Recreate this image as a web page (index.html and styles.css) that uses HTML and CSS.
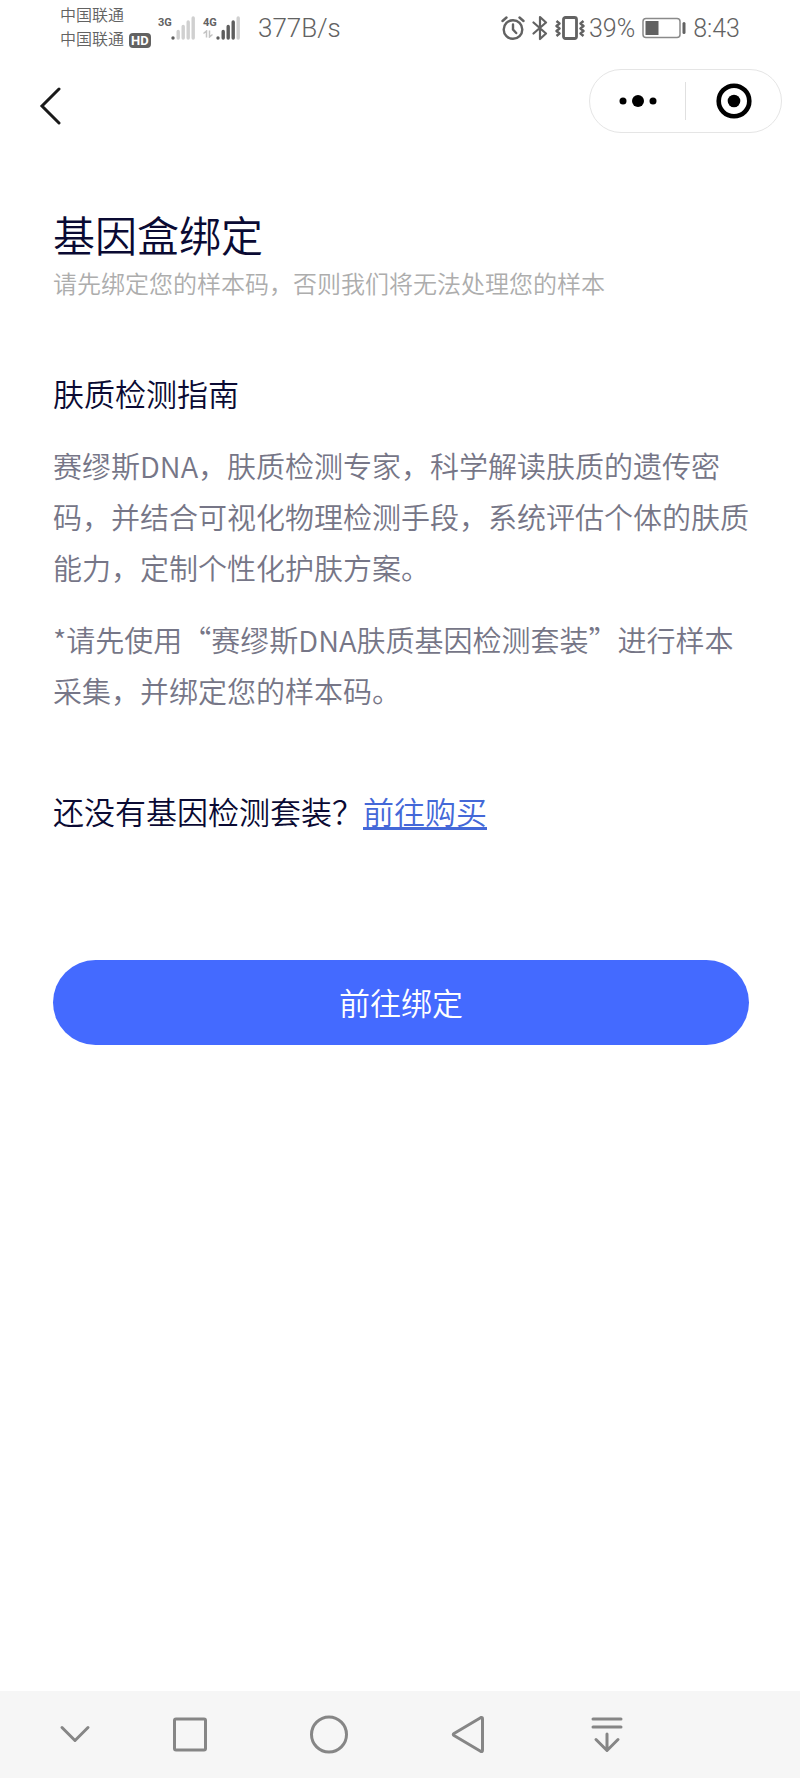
FILE: index.html
```html
<!DOCTYPE html>
<html lang="zh-CN">
<head>
  <meta charset="UTF-8">
  <meta name="viewport" content="width=device-width, initial-scale=1.0">
  <title>基因盒绑定</title>
  <link rel="stylesheet" href="styles.css">
</head>
<body>
  <!-- 状态栏 -->
  <div class="status">
    <div class="carriers">
      <div>中国联通</div>
      <div>中国联通<span class="hd">HD</span></div>
    </div>
    <div class="signal">
      <span class="net">3G</span>
      <svg width="24" height="24" viewBox="0 0 24 24" stroke="#d0d0d0" stroke-width="3.4" stroke-linecap="round">
        <path d="M7.2 15.5V22M12.2 10.5V22M17.2 6V22M22.2 2V22"/>
        <path stroke="#5e5e5e" d="M2 22V22"/>
      </svg>
    </div>
    <div class="signal">
      <span class="net">4G
        <svg width="10" height="8" viewBox="0 0 10 8" fill="none" stroke="#c4c4c4" stroke-width="1.5">
          <path d="M0.5 3.5L3.5 1V7.5M6.5 0.5V7L9.5 4.5"/>
        </svg>
      </span>
      <svg width="24" height="24" viewBox="0 0 24 24" stroke="#5e5e5e" stroke-width="3.4" stroke-linecap="round">
        <path d="M2 22V22M7.2 15.5V22M12.2 10.5V22M17.2 6V22"/>
        <path stroke="#d0d0d0" d="M22.2 2V22"/>
      </svg>
    </div>
    <span class="speed">377B/s</span>
    <div class="status-right">
      <svg width="24" height="26" viewBox="0 0 24 26" fill="none" stroke="#626262" stroke-width="2.4" stroke-linecap="round">
        <circle cx="12" cy="14.5" r="9.3"/>
        <path d="M12 9.5V14.5L15.2 18M1.5 6L5.5 2.5M22.5 6L18.5 2.5"/>
      </svg>
      <svg width="16" height="26" viewBox="0 0 16 26" fill="none" stroke="#626262" stroke-width="2.2" stroke-linejoin="round" stroke-linecap="round">
        <path d="M1.5 7.5L14 18.5L8 24V2L14 7.5L1.5 18.5"/>
      </svg>
      <svg class="vibrate" width="30" height="26" viewBox="0 0 30 26" fill="none" stroke="#626262" stroke-width="2.8" stroke-linejoin="round">
        <rect x="8.5" y="2.5" width="13" height="21" rx="2"/>
        <path stroke-width="2.4" d="M1.5 6L4.5 8.5L1.5 11L4.5 13.5L1.5 16L4.5 18.5L1.5 21M28.5 6L25.5 8.5L28.5 11L25.5 13.5L28.5 16L25.5 18.5L28.5 21"/>
      </svg>
      <span>39%</span>
      <svg class="battery" width="44" height="22" viewBox="0 0 44 22">
        <rect x="1" y="1.5" width="37" height="19" rx="3" fill="none" stroke="#8a8a8a" stroke-width="1.5"/>
        <rect x="3.5" y="4" width="13" height="14" fill="#626262"/>
        <rect x="40.5" y="5" width="3" height="12" rx="1.5" fill="#626262"/>
      </svg>
      <span>8:43</span>
    </div>
  </div>

  <!-- 导航栏 -->
  <header class="header">
    <button class="back" type="button" aria-label="返回">
      <svg width="22" height="40" viewBox="0 0 22 40" fill="none" stroke="#1a1a1a" stroke-width="3" stroke-linecap="round">
        <path d="M20 3L3 20L20 37"/>
      </svg>
    </button>
    <div class="capsule">
      <button type="button" aria-label="更多">
        <svg width="38" height="36" viewBox="0 0 38 36">
          <circle cx="4" cy="18" r="3.5"/>
          <circle cx="19" cy="18" r="6"/>
          <circle cx="34" cy="18" r="3.5"/>
        </svg>
      </button>
      <button type="button" aria-label="关闭">
        <svg width="36" height="36" viewBox="0 0 36 36">
          <circle cx="18" cy="18" r="15.3" fill="none" stroke="#000" stroke-width="4.6"/>
          <circle cx="18" cy="18" r="6.3"/>
        </svg>
      </button>
    </div>
  </header>

  <main class="main">
    <h1 class="title">基因盒绑定</h1>
    <p class="subtitle">请先绑定您的样本码，否则我们将无法处理您的样本</p>

    <h2 class="guide-title">肤质检测指南</h2>
    <div class="guide">
      <p>赛缪斯DNA，肤质检测专家，科学解读肤质的遗传密码，并结合可视化物理检测手段，系统评估个体的肤质能力，定制个性化护肤方案。</p>
      <p>*请先使用“赛缪斯DNA肤质基因检测套装”进行样本采集，并绑定您的样本码。</p>
    </div>

    <p class="buy">还没有基因检测套装？<a href="#">前往购买</a></p>

    <button class="bind" type="button">前往绑定</button>
  </main>

  <!-- 系统按键 -->
  <nav class="keys">
    <button type="button" aria-label="收起">
      <svg viewBox="0 0 40 41"><path d="M7 13.5L20 26.5L33 13.5"/></svg>
    </button>
    <button type="button" aria-label="最近任务">
      <svg viewBox="0 0 40 41"><rect x="4.5" y="5" width="31" height="31" rx="1.5"/></svg>
    </button>
    <button type="button" aria-label="主页">
      <svg viewBox="0 0 40 41"><circle cx="20" cy="20.5" r="17.5"/></svg>
    </button>
    <button type="button" aria-label="返回上一级">
      <svg viewBox="0 0 40 41"><path d="M33 3.5Q34.5 3 34.5 5V36Q34.5 38 33 37.5L6 21.5Q4.5 20.5 6 19.5Z"/></svg>
    </button>
    <button type="button" aria-label="通知栏">
      <svg viewBox="0 0 40 41"><path d="M6 5H34M6 13H34M20 20V36M9 25.5L20 36.5L31 25.5"/></svg>
    </button>
  </nav>
</body>
</html>
```
FILE: styles.css
```css
* {
  box-sizing: border-box;
  margin: 0;
  padding: 0;
}
body {
  display: flex;
  flex-direction: column;
  min-height: 100vh;
  background-color: #fff;
  color: #0a0a33;
  font-family: "Noto Sans CJK SC", sans-serif;
  font-weight: 350;
}
button {
  border: none;
  background: none;
  font: inherit;
  cursor: pointer;
}
svg {
  display: block;
}

/* 状态栏 */
.status {
  display: flex;
  align-items: center;
  height: 56px;
  padding: 0 60px;
  color: #626262;
  font-family: Roboto, "Noto Sans CJK SC", sans-serif;
}
.carriers {
  width: 98px;
  font-size: 16px;
  line-height: 24px;
}
.carriers div {
  display: flex;
  align-items: center;
}
.hd {
  margin-left: 5px;
  padding: 0 2px;
  border-radius: 4px;
  background-color: #626262;
  color: #fff;
  font-size: 13px;
  font-weight: 700;
  line-height: 15px;
}
.signal {
  display: flex;
  width: 45px;
}
.net {
  width: 13px;
  font-size: 11px;
  font-weight: 700;
  line-height: 14px;
}
.speed {
  margin-left: 10px;
  font-size: 26px;
  font-weight: 300;
}
.status-right {
  display: flex;
  align-items: center;
  margin-left: auto;
  font-size: 25px;
  font-weight: 300;
}
.status-right svg {
  margin-right: 7px;
}
.status-right .vibrate {
  margin-right: 4px;
}
.status-right .battery {
  margin-left: 7px;
}

/* 导航栏 */
.header {
  display: flex;
  align-items: center;
  justify-content: space-between;
  height: 90px;
  padding: 0 18px 0 39px;
}
.back {
  padding-top: 10px;
}
.capsule {
  display: flex;
  align-items: center;
  width: 193px;
  height: 64px;
  border: 1px solid #e5e5e5;
  border-radius: 32px;
}
.capsule button {
  display: flex;
  flex: 1;
  align-items: center;
  justify-content: center;
  height: 38px;
}
.capsule button + button {
  border-left: 1px solid #e0e0e0;
}

/* 内容 */
.main {
  flex: 1;
  padding: 63px 51px 63px 53px;
}
.title {
  font-size: 42px;
  font-weight: 350;
  line-height: 50px;
}
.subtitle {
  margin-top: 7px;
  color: #adadad;
  font-size: 24px;
  line-height: 34px;
}
.guide-title {
  margin-top: 71px;
  font-size: 31px;
  font-weight: 350;
  line-height: 44px;
}
.guide {
  margin-top: 25px;
  color: #767687;
  font-size: 29px;
  line-height: 51px;
}
.guide p + p {
  margin-top: 21px;
}
.buy {
  margin-top: 73px;
  font-size: 31px;
  line-height: 44px;
}
.buy a {
  color: #4468d8;
  text-decoration-thickness: 3px;
  text-underline-offset: 3px;
  text-decoration-skip-ink: none;
}
.bind {
  display: block;
  width: 100%;
  height: 85px;
  margin-top: 127px;
  padding-bottom: 2px;
  border-radius: 43px;
  background-color: #446aff;
  color: #fff;
  font-size: 31px;
}

/* 系统按键 */
.keys {
  display: grid;
  grid-template-columns: 92fr repeat(4, 139fr);
  height: 87px;
  padding: 0 124px 0 29px;
  background-color: #f6f6f6;
}
.keys button {
  display: flex;
  align-items: center;
  justify-content: center;
}
.keys svg {
  width: 40px;
  height: 41px;
  fill: none;
  stroke: #868686;
  stroke-width: 3;
  stroke-linecap: round;
  stroke-linejoin: round;
}
```
